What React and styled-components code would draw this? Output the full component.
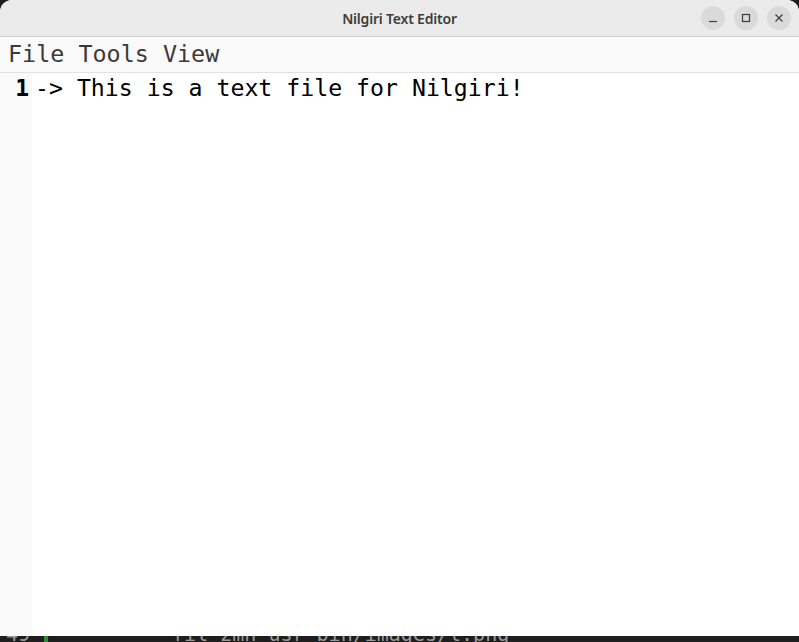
import React from "react";
import styled, { createGlobalStyle } from "styled-components";

const Global = createGlobalStyle`
  html, body { margin: 0; padding: 0; background: #1d1d1d; }
  body { width: 799px; height: 642px; overflow: hidden; }
`;

const lines = ["-> This is a text file for Nilgiri!"];

const App = () => {
  return (
    <>
      <Global />
      <Screen>
        <Window>
          <TitleBar>
            <Title>Nilgiri Text Editor</Title>
            <Controls>
              <WinButton aria-label="minimize">
                <svg width="10" height="10" viewBox="0 0 10 10">
                  <path d="M1 8.5h8" stroke="#3d3d3d" strokeWidth="1.2" />
                </svg>
              </WinButton>
              <WinButton aria-label="maximize">
                <svg width="10" height="10" viewBox="0 0 10 10">
                  <rect x="1.5" y="1.5" width="7" height="7" fill="none" stroke="#3d3d3d" strokeWidth="1.2" />
                </svg>
              </WinButton>
              <WinButton aria-label="close">
                <svg width="10" height="10" viewBox="0 0 10 10">
                  <path d="M1.5 1.5l7 7M8.5 1.5l-7 7" stroke="#3d3d3d" strokeWidth="1.2" />
                </svg>
              </WinButton>
            </Controls>
          </TitleBar>
          <MenuBar>
            <MenuItem>File</MenuItem>
            <MenuItem>Tools</MenuItem>
            <MenuItem>View</MenuItem>
          </MenuBar>
          <Editor>
            <Gutter>
              {lines.map((_, i) => (
                <LineNo key={i}>{i + 1}</LineNo>
              ))}
            </Gutter>
            <Code>
              {lines.map((l, i) => (
                <CodeLine key={i}>{l}</CodeLine>
              ))}
            </Code>
          </Editor>
        </Window>
        <Terminal>
          <TermNo>49</TermNo>
          <TermMark />
          <TermText>* fil 2mn usr bin/images/l.png</TermText>
        </Terminal>
      </Screen>
    </>
  );
};

export default App;

const Screen = styled.div`
  display: flex;
  flex-direction: column;
  width: 799px;
  height: 642px;
`;

const Window = styled.div`
  display: flex;
  flex-direction: column;
  height: 636px;
  background: #ffffff;
  border-radius: 12px 12px 0 0;
  overflow: hidden;
`;

const TitleBar = styled.div`
  height: 36px;
  flex-shrink: 0;
  display: flex;
  align-items: center;
  justify-content: center;
  background: #ebebeb;
  border-bottom: 1px solid #cfcfcf;
  position: relative;
`;

const Title = styled.div`
  font-family: "Noto Sans", "Open Sans", sans-serif;
  font-weight: 600;
  font-size: 14px;
  color: #3d3d3d;
  letter-spacing: -0.2px;
`;

const Controls = styled.div`
  position: absolute;
  right: 8px;
  top: 6px;
  display: flex;
  gap: 9px;
`;

const WinButton = styled.div`
  width: 24px;
  height: 24px;
  border-radius: 50%;
  background: #dadada;
  display: flex;
  align-items: center;
  justify-content: center;
`;

const MenuBar = styled.div`
  height: 34px;
  flex-shrink: 0;
  display: flex;
  align-items: center;
  gap: 14.1px;
  padding: 1px 8px 0;
  background: #fafafa;
  border-bottom: 1px solid #e2e2e2;
`;

const MenuItem = styled.span`
  font-family: "DejaVu Sans Mono", monospace;
  font-size: 23.4px;
  color: #3a3a3a;
  line-height: 1;
`;

const Editor = styled.div`
  flex: 1;
  display: flex;
  background: #ffffff;
`;

const Gutter = styled.div`
  width: 32px;
  flex-shrink: 0;
  background: #f9f9f9;
  padding-top: 1px;
  display: flex;
  flex-direction: column;
  align-items: flex-end;
`;

const LineNo = styled.div`
  font-family: "DejaVu Sans Mono", monospace;
  font-weight: bold;
  font-size: 23px;
  line-height: 28px;
  color: #000;
  padding-right: 3px;
`;

const Code = styled.div`
  flex: 1;
  padding: 1px 0 0 3px;
`;

const CodeLine = styled.div`
  font-family: "DejaVu Sans Mono", monospace;
  font-size: 23.2px;
  line-height: 28px;
  color: #000;
  white-space: pre;
`;

const Terminal = styled.div`
  height: 6px;
  background: #1e1e1e;
  display: flex;
  align-items: flex-start;
  overflow: hidden;
  font-family: "DejaVu Sans Mono", monospace;
  font-size: 20px;
  color: #9a9a9a;
  line-height: 1;
`;

const TermNo = styled.span`
  width: 38px;
  padding-left: 6px;
  margin-top: -12px;
`;

const TermMark = styled.span`
  width: 4px;
  height: 6px;
  background: #2e8b3a;
  margin-right: 100px;
`;

const TermText = styled.span`
  margin-top: -12px;
`;
